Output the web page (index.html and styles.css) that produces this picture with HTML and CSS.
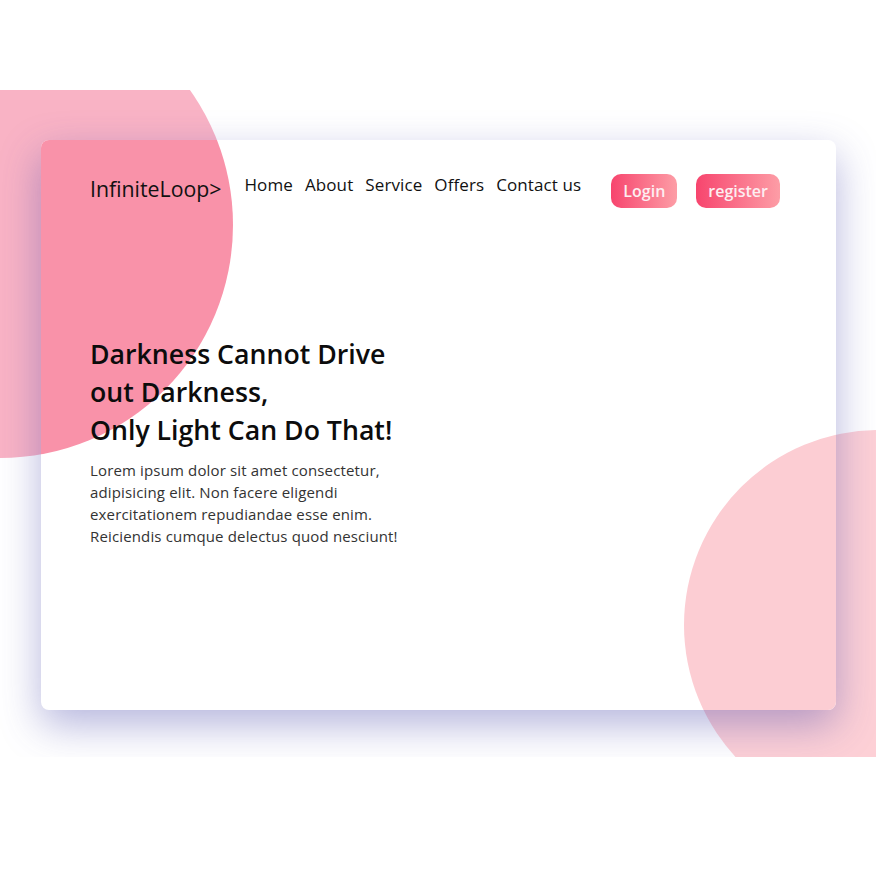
FILE: index.html
```html
<!DOCTYPE html>
<html lang="en">
<head>
<meta charset="utf-8">
<title>InfiniteLoop</title>
<link rel="stylesheet" href="styles.css">
</head>
<body>
<section class="hero">
  <div class="circle circle-left"></div>
  <div class="circle circle-right"></div>
  <div class="card">
    <div class="circle circle-left-in"></div>
    <div class="circle circle-right-in"></div>
    <nav class="nav">
      <div class="logo">InfiniteLoop&gt;</div>
      <ul class="links">
        <li>Home</li>
        <li>About</li>
        <li>Service</li>
        <li>Offers</li>
        <li>Contact us</li>
      </ul>
      <div class="actions">
        <button class="btn">Login</button>
        <button class="btn">register</button>
      </div>
    </nav>
    <div class="content">
      <h1 class="title">Darkness Cannot Drive<br>out Darkness,<br>Only Light Can Do That!</h1>
      <p class="text">Lorem ipsum dolor sit amet consectetur, adipisicing elit. Non facere eligendi exercitationem repudiandae esse enim. Reiciendis cumque delectus quod nesciunt!</p>
    </div>
  </div>
</section>
</body>
</html>
```
FILE: styles.css
```css
* { box-sizing: border-box; }
body {
  margin: 0;
  padding-top: 90px;
  background: #fff;
  font-family: "Open Sans", "Noto Sans", sans-serif;
  color: #111;
}
.hero {
  position: relative;
  width: 876px;
  height: 667px;
  overflow: hidden;
  padding: 50px 40px 0 41px;
}
.circle {
  position: absolute;
  border-radius: 50%;
}
.circle-left {
  left: -233px;
  top: -98px;
  width: 466px;
  height: 466px;
  background: #f9b3c5;
}
.circle-right {
  left: 684px;
  top: 340px;
  width: 390px;
  height: 390px;
  background: #fdd0d6;
}
.card {
  position: relative;
  width: 795px;
  height: 570px;
  background: #fff;
  border-radius: 8px;
  overflow: hidden;
  box-shadow: 0 15px 40px rgba(70, 70, 170, 0.4);
}
.circle-left-in {
  left: -274px;
  top: -148px;
  width: 466px;
  height: 466px;
  background: #f992a9;
}
.circle-right-in {
  left: 643px;
  top: 290px;
  width: 390px;
  height: 390px;
  background: #fccdd3;
}
.nav {
  position: relative;
  display: flex;
  align-items: flex-start;
  padding: 34px 56px 0 49px;
}
.logo {
  font-size: 21.3px;
  line-height: 30px;
  color: #111;
}
.links {
  display: flex;
  gap: 12px;
  list-style: none;
  margin: -1px 0 0 23px;
  padding: 0;
  font-size: 17px;
  letter-spacing: 0.1px;
  line-height: 24px;
  color: #111;
}
.actions {
  display: flex;
  gap: 19px;
  margin-left: auto;
}
.btn {
  height: 34px;
  padding: 0 12px;
  border: none;
  border-radius: 10px;
  background: linear-gradient(to right, #f7456e, #fd9da6);
  color: #fdeef1;
  font-family: inherit;
  font-size: 16px;
  font-weight: 600;
}
.content {
  position: relative;
  padding: 127px 0 0 49px;
}
.title {
  margin: 0;
  font-size: 26.7px;
  line-height: 38px;
  font-weight: 600;
  color: #0c0c0c;
}
.text {
  width: 320px;
  margin: 10px 0 0;
  font-size: 15px;
  letter-spacing: 0.15px;
  line-height: 22px;
  color: #333;
}
```
